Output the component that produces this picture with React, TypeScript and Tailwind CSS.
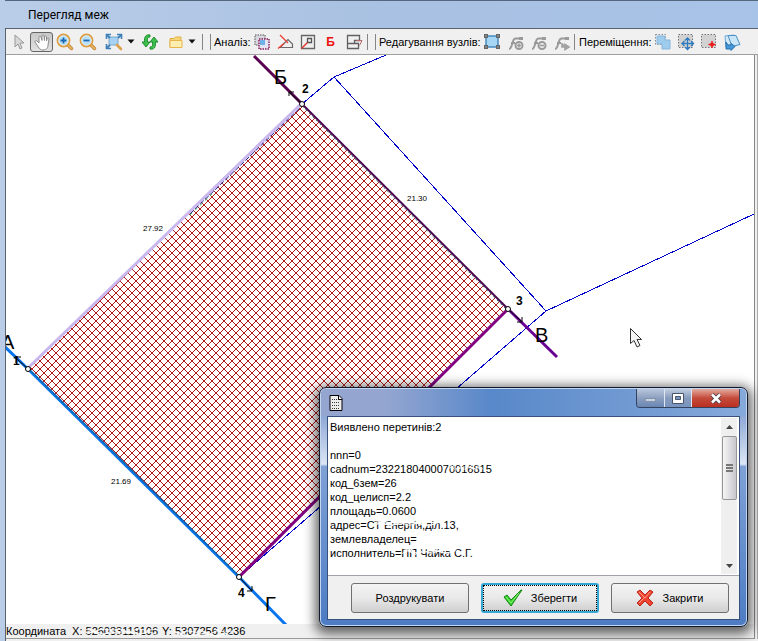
import type { ReactNode } from 'react';

function Tool({ label, active = false, children }: { label: string; active?: boolean; children: ReactNode }) {
  return (
    <button
      type="button"
      aria-label={label}
      className={
        active
          ? 'flex h-5 w-[23px] shrink-0 items-center justify-center rounded-[3px] border border-[#666] bg-linear-to-b from-[#c8c8c8] to-[#e2e2e2]'
          : 'flex h-5 w-[23px] shrink-0 items-center justify-center'
      }
    >
      {children}
    </button>
  );
}

function Icon({ children }: { children: ReactNode }) {
  return (
    <svg width="18" height="18" viewBox="0 0 18 18" fill="none" className="shrink-0">
      {children}
    </svg>
  );
}

function Divider() {
  return <div className="h-4 w-px shrink-0 bg-[#858585]" />;
}

function Caret() {
  return (
    <svg width="8" height="5" viewBox="0 0 8 5" className="shrink-0">
      <path d="M0.5 0.5h7L4 4.5z" fill="#111" />
    </svg>
  );
}

function Magnifier({ plus }: { plus: boolean }) {
  return (
    <Icon>
      <path d="M11.5 11.5l4 4" stroke="#c58a3c" strokeWidth="3.4" strokeLinecap="round" />
      <path d="M11.5 11.5l4 4" stroke="#eab866" strokeWidth="1.6" strokeLinecap="round" />
      <circle cx="7.5" cy="7.5" r="6" fill="#b9e0f8" stroke="#df9c3e" strokeWidth="1.8" />
      <circle cx="7.5" cy="7.5" r="4.8" stroke="#e4f3fc" strokeWidth="0.8" />
      <path d={plus ? 'M4.5 7.5h6M7.5 4.5v6' : 'M4.5 7.5h6'} stroke="#1768b4" strokeWidth="1.8" />
    </Icon>
  );
}

function NodeIcon({ kind }: { kind: 'add' | 'remove' | 'move' }) {
  return (
    <Icon>
      <path d="M2 16c2 0 2.500-3 3.500-6s1-4.500 3-4.500h6M4 10h4" stroke="#9a9a9a" strokeWidth="2" />
      <path d="M12 4h4v3h-4z" fill="#9a9a9a" />
      {kind === 'move' ? (
        <path d="M9 10v4h5M12 11.500l4 2.500-4 2.500z" stroke="#a2a2a2" strokeWidth="1.6" fill="#a2a2a2" />
      ) : (
        <>
          <circle cx="12" cy="12.500" r="3.500" stroke="#9a9a9a" strokeWidth="2" />
          <path d={kind === 'add' ? 'M10 12.500h4M12 10.500v4' : 'M10 12.500h4'} stroke="#9a9a9a" strokeWidth="1.600" />
        </>
      )}
    </Icon>
  );
}

function Toolbar() {
  return (
    <div
      role="toolbar"
      aria-label="Панель інструментів"
      className="flex h-[26px] shrink-0 items-center overflow-hidden border-b border-[#a0a0a0] bg-[#f0f0f0] pl-px"
    >
      <Tool label="Вибір">
        <Icon>
          <path d="M5 2v12l3-3 2 5 2-1-2-5h4z" fill="#d8d8d8" stroke="#999" />
        </Icon>
      </Tool>
      <Tool label="Рука" active>
        <Icon>
          <path
            d="M6 10L4 8c-1-1-2.500 0-2 1l4 6c1 1 2 2 4 2 4 0 5-3 5-5l1-6c0-1.500-1.700-1.500-2 0l-.5 2V4c0-1.400-2-1.400-2 0v3.500L11 3c0-1.400-2-1.400-2 0v4.500L8 4C7.600 2.700 5.800 3 6 4.500z"
            fill="#fff"
            stroke="#8a8a8a"
          />
        </Icon>
      </Tool>
      <Tool label="Збільшити"><Magnifier plus /></Tool>
      <Tool label="Зменшити"><Magnifier plus={false} /></Tool>
      <button type="button" aria-label="Показати все" className="mx-1.5 flex h-5 shrink-0 items-center gap-1">
        <Icon>
          <path d="M4 4h9v8H4z" fill="#a5d2f4" stroke="#7da8c8" />
          <path d="M5 5L2 2m11 3l3-3M5 12l-3 3" stroke="#3c7fb8" strokeWidth="1.800" />
          <path d="M1.500 6V1.500H6M12 1.500h4.500V6M1.500 11v4.500H6" stroke="#3c7fb8" strokeWidth="1.600" />
          <path d="M12 12l4 4" stroke="#dda14d" strokeWidth="2.600" strokeLinecap="round" />
        </Icon>
        <Caret />
      </button>
      <button type="button" aria-label="Оновити" className="mr-2 flex h-5 shrink-0 items-center">
        <Icon>
          <path d="M9 2C5 1 3 4 3.500 9H1l4 5 4-5H6.500C6 6 6.500 4 9 4z" fill="#3dc04b" stroke="#148527" strokeWidth="0.900" />
          <path d="M9 16c4 1 6-2 5.500-7H17l-4-5-4 5h2.500c.5 3 0 5-2.500 5z" fill="#3dc04b" stroke="#148527" strokeWidth="0.900" />
        </Icon>
      </button>
      <button type="button" aria-label="Відкрити" className="mr-1.5 flex h-5 shrink-0 items-center gap-[3px]">
        <Icon>
          <path d="M3 14.500V5.500h4L8.500 4h5.500v10.500z" fill="#f6d67a" stroke="#e0ad42" />
          <path d="M3 14.500v-7h12v7z" fill="#fdeeb0" stroke="#e5b64e" />
        </Icon>
        <Caret />
      </button>
      <div className="flex shrink-0 gap-[7px]"><Divider /><Divider /></div>
      <span className="ml-[3px] w-9 shrink-0 whitespace-nowrap">Аналіз:</span>
      <Tool label="Перетини">
        <Icon>
          <path d="M2 2h10v10H2z" fill="#d8d8e0" stroke="#858585" strokeWidth="1.500" strokeDasharray="1.500 1" />
          <path d="M6 6h10v10H6z" fill="#e3e6f2" stroke="#8c1b5c" strokeWidth="1.500" strokeDasharray="1.500 1" />
          <path d="M7 7h5v5H7z" fill="#6fb0e8" />
        </Icon>
      </Tool>
      <Tool label="Кут">
        <Icon>
          <path d="M8 10.500l-4 4h12.500V11L12 6.500l-4 4" stroke="#6a6a6a" strokeWidth="1.200" />
          <path d="M4 2l8 8M8 10.500l-6 5" stroke="#ef3c30" strokeWidth="1.300" />
        </Icon>
      </Tool>
      <Tool label="Межа">
        <Icon>
          <path d="M2.500 2.500h13v13h-13z" stroke="#666" strokeWidth="1.300" />
          <path d="M8.500 5.500h4v4h-4z" stroke="#555" strokeWidth="1.300" />
          <path d="M8.500 9.500l-6 6" stroke="#e4362d" strokeWidth="1.500" />
        </Icon>
      </Tool>
      <Tool label="Буферна зона"><span className="text-xs font-bold text-[#ed1010]">Б</span></Tool>
      <Tool label="Розбіжності">
        <Icon>
          <path d="M2.500 2.500h12v5h-5v3h-7zM2.500 10.500v5h11v-5h-4" stroke="#606060" strokeWidth="1.300" />
          <path d="M11 7.500h6l-2.500 5" stroke="#b96a6a" />
        </Icon>
      </Tool>
      <div className="ml-0.5 flex shrink-0 gap-[7px]"><Divider /><Divider /></div>
      <span className="ml-[3px] w-[101px] shrink-0 whitespace-nowrap">Редагування вузлів:</span>
      <Tool label="Редагувати вузли">
        <Icon>
          <path d="M3 3h12v11H3z" fill="#a7d6f5" stroke="#468ac0" strokeWidth="1.500" />
          <path d="M1 1h4v4H1zM13 1h4v4h-4zM1 12h4v4H1zM13 12h4v4h-4z" fill="#666" />
          <path d="M2.500 2.500h1v1h-1zM14.500 2.500h1v1h-1zM2.500 13.500h1v1h-1zM14.500 13.500h1v1h-1z" fill="#ddd" />
        </Icon>
      </Tool>
      <div className="flex shrink-0 pl-px">
        <Tool label="Додати вузол"><NodeIcon kind="add" /></Tool>
        <Tool label="Видалити вузол"><NodeIcon kind="remove" /></Tool>
        <Tool label="Перемістити вузол"><NodeIcon kind="move" /></Tool>
      </div>
      <div className="ml-px"><Divider /></div>
      <span className="ml-1 w-[72px] shrink-0 whitespace-nowrap">Переміщення:</span>
      <Tool label="Перемістити об’єкт">
        <Icon>
          <path d="M1.500 1.500h10v10h-10z" stroke="#888" strokeDasharray="1.500 1.500" />
          <path d="M3 3h8v4h5v9H8v-5H3z" fill="#9fcbed" stroke="#86b7dd" />
        </Icon>
      </Tool>
      <Tool label="Перемістити центр">
        <Icon>
          <path d="M1.500 1.500h14v13h-14z" fill="#d2d2d2" stroke="#777" strokeDasharray="1.500 1.500" />
          <path d="M10.500 5v12M5 10.500h12M8 7.500L10.500 5 13 7.500M8 14l2.500 2.500L13 14M7.500 8L5 10.500 7.500 13M14 8l2.500 2.500L14 13" stroke="#307bc0" strokeWidth="1.300" />
        </Icon>
      </Tool>
      <Tool label="Перемістити в точку">
        <Icon>
          <path d="M1.500 1.500h14v13h-14z" fill="#d2d2d2" stroke="#777" strokeDasharray="1.500 1.500" />
          <path d="M12 8v7M8.500 11.500h7" stroke="#ee1c1c" strokeWidth="1.400" />
          <circle cx="12" cy="11.500" r="2" fill="#ee1c1c" />
        </Icon>
      </Tool>
      <Tool label="Повернути">
        <Icon>
          <path d="M2 3l9-1v8l-8 4z" fill="#d4eafa" stroke="#6da7d4" />
          <path d="M5 2.500h8l4 9-8 2z" fill="#c9e5f8" stroke="#4d90c5" />
          <path d="M3 9v7h5v1.500l4-4-4-3V12H5z" fill="#4897d8" stroke="#2470ad" />
        </Icon>
      </Tool>
    </div>
  );
}

const vertices = [[28, 368], [302, 103], [508, 308], [239, 576]];

function MapCanvas() {
  return (
    <svg className="block min-h-0 w-full flex-1 bg-white" role="img" aria-label="План ділянки">
      <defs>
        <pattern id="hatch" width="8" height="8" patternUnits="userSpaceOnUse">
          <path d="M0 0l8 8M8 0L0 8" stroke="#b01c1c" strokeWidth="1" shapeRendering="crispEdges" />
        </pattern>
      </defs>
      <g transform="translate(-6 -54)">
        <g stroke="#0000c8" fill="none" shapeRendering="crispEdges">
          <path d="M302 103L334 76L386 54M334 76L546 310L754 213M546 310L239 576" />
        </g>
        <path d="M28 368L302 103L508 308L239 576Z" fill="#fff" />
        <path d="M28 368L302 103L508 308L239 576Z" fill="url(#hatch)" />
        <path d="M28 367L301 103" stroke="#c9b7ef" strokeWidth="3" />
        <path d="M190 213L303 104" stroke="#24208b" strokeDasharray="5 2" />
        <path d="M190 214L212 193" stroke="#46c95b" strokeDasharray="3 4" />
        <path d="M302 105L508 310" stroke="#2a8060" strokeDasharray="2 3" />
        <path d="M254 55L302 103" stroke="#5a0050" strokeWidth="3" />
        <path d="M302 103L508 308" stroke="#4a0750" strokeWidth="2" />
        <path d="M508 308L557 356" stroke="#680092" strokeWidth="3" />
        <path d="M508 308L239 576" stroke="#800080" strokeWidth="3" />
        <path d="M4 345L28 368L239 576L287 625" stroke="#0874ed" strokeWidth="3" fill="none" />
        <path d="M30 369L240 576" stroke="#126080" />
        <g stroke="#000" fill="none">
          <path d="M302 103L289 91M289 95V91H294M508 308L521 320M517 321H522V316M239 576L252 590M247 590H252V585M28 368L16 357M16 362V356H21" />
        </g>
        <g stroke="#000" fill="#fff">
          {vertices.map(([x, y]) => <circle key={x} cx={x} cy={y} r="2.500" />)}
        </g>
        <g fontSize="20">
          <text x="1" y="348">А</text>
          <text x="274" y="83">Б</text>
          <text x="535" y="341">В</text>
          <text x="265" y="610">Г</text>
        </g>
        <g fontSize="12" fontWeight="bold">
          <text x="13" y="364">1</text>
          <text x="302" y="92">2</text>
          <text x="516" y="304">3</text>
          <text x="238" y="596">4</text>
        </g>
        <g fontSize="8">
          <text x="143" y="230">27.92</text>
          <text x="407" y="200">21.30</text>
          <text x="111" y="483">21.69</text>
        </g>
        <path d="M630.500 327.500v15l3.500-3 3 6.500 3-1.500-3-6h4.500z" fill="#f4f4f4" stroke="#333" />
      </g>
    </svg>
  );
}

function Smudge({ className }: { className: string }) {
  return (
    <svg className={className} viewBox="0 0 60 10" preserveAspectRatio="none" aria-hidden="true">
      <path
        d="M0 2l7 2 5-3 8 2 5-2 7 4 7-4 7 2 7-2M0 8l5-3 7 4 6-4 8 3 7-3 7 4 6-5 7 4M2 5h6l4 2h7l4-2h8l4 2h8l4-2"
        fill="none"
        stroke="#fff"
        strokeWidth="1"
      />
    </svg>
  );
}

const report = `Виявлено перетинів:2

nnn=0
cadnum=2322180400070016815
код_6зем=26
код_целисп=2.2
площадь=0.0600
адрес=СТ Енергія,діл.13,
землевладелец=
исполнитель=ПП Чайка С.Г.`;

const buttonBase =
  'flex h-[30px] w-[118px] items-center justify-center gap-2 rounded-[3px] bg-linear-to-b from-[#f3f3f3] via-[#e9e9e9] via-50% to-[#cfcfcf] whitespace-nowrap';

function ReportDialog() {
  return (
    <section
      role="dialog"
      aria-label="Результат"
      className="absolute left-[319px] top-[387px] w-[429px] rounded-[7px] border border-[#101a2c] bg-[linear-gradient(to_bottom,#8fa9d6_0%,#8fa9d6_12%,#dbe5f4_32%,#7fa1d6_33%,#4d7cc4_100%)] px-[7px] pb-[6px] shadow-[0_3px_12px_4px_rgba(0,0,0,0.6),inset_0_0_0_1px_#c3d6ef]"
    >
      <header className="-mx-1.5 mt-px flex h-[27px] items-start justify-between rounded-t-[5px] bg-linear-to-r from-[#94a6d0] from-15% via-[#5888c9] via-40% to-[#86a9da] px-1.5">
        <svg width="14" height="16" viewBox="0 0 14 16" className="ml-0.5 mt-1.5">
          <path d="M1 .5h9l3 3v12H1z" fill="#eee" stroke="#000" />
          <path d="M3 4.500h8M3 7.500h8M3 10.500h8M3 13.500h8" stroke="#333" strokeDasharray="1 1" />
          <path d="M9.500 1v3.500H13" fill="#fff" stroke="#000" />
        </svg>
        <div className="flex h-[19px] overflow-hidden rounded-b-[4px] border border-t-0 border-[#34425d]">
          <button type="button" aria-label="Згорнути" className="flex w-7 items-center justify-center border-r border-[#dfe7f3] bg-linear-to-b from-[#b9c6dc] via-[#8da0bf] via-50% to-[#6986b3]">
            <span className="mt-1 h-1 w-[11px] border border-[#8193ad] bg-[#c9d2e0]" />
          </button>
          <button type="button" aria-label="Розгорнути" className="flex w-[27px] items-center justify-center border-r border-[#dfe7f3] bg-linear-to-b from-[#c3cee0] via-[#879bbc] via-50% to-[#7895c1]">
            <svg width="12" height="11" viewBox="0 0 12 11">
              <path d="M.5.5h11v10H.5z" fill="#fff" stroke="#49556a" />
              <path d="M3.500 3.500h5v3h-5z" fill="#7795c1" stroke="#49556a" />
            </svg>
          </button>
          <button type="button" aria-label="Закрити вікно" className="flex w-[47px] items-center justify-center bg-linear-to-b from-[#e1aaa0] via-[#c54b3b] via-50% to-[#b92f22]">
            <svg width="12" height="11" viewBox="0 0 12 11">
              <path d="M2 1.500l8 8M10 1.500l-8 8" stroke="#54404a" strokeWidth="4.500" />
              <path d="M2 1.500l8 8M10 1.500l-8 8" stroke="#fff" strokeWidth="2.600" />
            </svg>
          </button>
        </div>
      </header>
      <div className="border border-[#35517c] bg-[#f0f0f0]">
        <div className="relative flex h-[159px] border-b border-[#a0a3aa] bg-white">
          <textarea
            readOnly
            aria-label="Звіт про перетини"
            value={report}
            className="block h-full flex-1 resize-none overflow-hidden bg-white py-[3px] pl-0.5 text-[11px] leading-[14px] outline-none"
          />
          <Smudge className="absolute left-[120px] top-[46px] h-2 w-10" />
          <Smudge className="absolute left-[46px] top-[102px] h-2 w-[82px]" />
          <Smudge className="absolute left-[74px] top-[130px] h-2 w-[68px]" />
          <div className="m-px mr-0.5 flex w-4 flex-col items-center bg-[#efefef]" aria-hidden="true">
            <div className="flex h-[18px] items-center">
              <svg width="7" height="4" viewBox="0 0 7 4"><path d="M0 4l3.500-4L7 4z" fill="#444" /></svg>
            </div>
            <div className="flex h-16 w-[15px] flex-col items-center justify-center gap-px rounded-[2px] border border-[#969696] bg-linear-to-r from-[#f5f5f5] to-[#c8c8cc]">
              <div className="h-0.5 w-[7px] bg-[#777]" />
              <div className="h-0.5 w-[7px] bg-[#777]" />
              <div className="h-0.5 w-[7px] bg-[#777]" />
            </div>
            <div className="flex flex-1 items-end pb-1.5">
              <svg width="7" height="4" viewBox="0 0 7 4"><path d="M0 0l3.500 4L7 0z" fill="#444" /></svg>
            </div>
          </div>
        </div>
        <footer className="flex h-[43px] items-center justify-end gap-3 pr-2.5">
          <button type="button" className={`${buttonBase} border border-[#707070]`}>Роздрукувати</button>
          <button type="button" className={`${buttonBase} relative border-2 border-[#35a7d4]`}>
            <span className="absolute inset-0 border border-dotted border-black" />
            <svg width="20" height="18" viewBox="0 0 20 18">
              <path d="M1 8l3-2 4 5L18 1h1L8 17z" fill="#32d129" stroke="#168717" />
              <path d="M3 8l5 6 8-10" fill="none" stroke="#97f27f" />
            </svg>
            Зберегти
          </button>
          <button type="button" className={`${buttonBase} border border-[#707070]`}>
            <svg width="18" height="18" viewBox="0 0 18 18">
              <path d="M1 3l3-2 5 5 5-5 3 2-5 6 5 5-3 3-5-5-5 5-3-3 5-5z" fill="#f04432" stroke="#b9261d" />
              <path d="M3 3l6 6 5-6M3 14l5-5" fill="none" stroke="#ff9a83" />
            </svg>
            Закрити
          </button>
        </footer>
      </div>
    </section>
  );
}

export default function App() {
  return (
    <main className="relative flex h-screen flex-col overflow-hidden bg-linear-to-r from-[#b9cde8] via-[#a9c1e2] to-[#a8c3e8] pl-[5px] font-['Liberation_Sans',Arial,sans-serif] text-[11px] leading-[14px] text-black">
      <header className="flex h-7 shrink-0 items-center border-t border-[#55677f] pl-[23px]">
        <h1 className="font-[Roboto,sans-serif] text-xs font-normal">Перегляд меж</h1>
      </header>
      <div className="flex min-h-0 flex-1 flex-col border-l border-t border-[#59636f] bg-[#f0f0f0]">
        <Toolbar />
        <div className="flex min-h-0 flex-1 border-r border-[#aaa] pr-0.5">
          <div className="flex min-w-0 flex-1 flex-col border-r border-[#888]">
            <MapCanvas />
            <footer className="relative flex h-[15px] shrink-0 items-center gap-1 border-b border-[#999]">
              <span>Координата</span>
              <span className="ml-0.5">X: 526033119106</span>
              <span>Y: 5307256 4236</span>
              <Smudge className="absolute left-20 top-1 h-2 w-20" />
              <Smudge className="absolute left-[168px] top-1.5 h-2 w-[66px]" />
            </footer>
          </div>
        </div>
        <div className="h-0.5 shrink-0" />
      </div>
      <ReportDialog />
    </main>
  );
}
